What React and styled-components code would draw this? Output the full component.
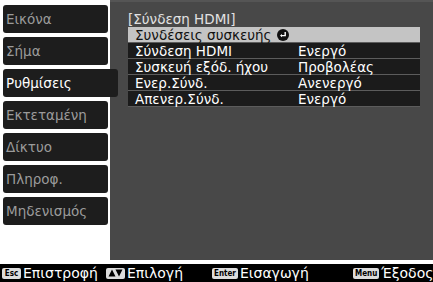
import styled, { createGlobalStyle } from 'styled-components';

const GlobalStyle = createGlobalStyle`
  html, body {
    margin: 0;
    padding: 0;
    background: #ffffff;
  }
  body {
    font-family: 'DejaVu Sans', 'Noto Sans', sans-serif;
  }
`;

const tabs = ['Εικόνα', 'Σήμα', 'Ρυθμίσεις', 'Εκτεταμένη', 'Δίκτυο', 'Πληροφ.', 'Μηδενισμός'];
const activeTab = 'Ρυθμίσεις';

const rows = [
  { label: 'Σύνδεση HDMI', value: 'Ενεργό' },
  { label: 'Συσκευή εξόδ. ήχου', value: 'Προβολέας' },
  { label: 'Ενερ.Σύνδ.', value: 'Ανενεργό' },
  { label: 'Απενερ.Σύνδ.', value: 'Ενεργό' },
];

const hints = [
  { key: 'Esc', label: 'Επιστροφή' },
  { key: 'arrows', label: 'Επιλογή' },
  { key: 'Enter', label: 'Εισαγωγή' },
  { key: 'Menu', label: 'Έξοδος' },
];

function EnterIcon() {
  return (
    <svg width="12" height="12" viewBox="0 0 12 12">
      <circle cx="6" cy="6" r="6" fill="#111" />
      <path d="M8.2 3 V6.6 H4.4" fill="none" stroke="#fff" strokeWidth="1.4" />
      <path d="M3 6.6 L5 5 V8.2 Z" fill="#fff" />
    </svg>
  );
}

function ArrowKeys() {
  return (
    <svg width="15" height="8" viewBox="0 0 15 8">
      <path d="M0.5 7.5 L4 0.5 L7.5 7.5 Z" fill="#000" />
      <path d="M7.5 0.5 L14.5 0.5 L11 7.5 Z" fill="#000" />
    </svg>
  );
}

export default function App() {
  return (
    <>
      <GlobalStyle />
      <Screen>
        <Top>
          <Sidebar>
            {tabs.map((t) => (
              <Tab key={t} $active={t === activeTab}>
                {t}
              </Tab>
            ))}
          </Sidebar>
          <Panel>
            <Title>[Σύνδεση HDMI]</Title>
            <List>
              <HighlightRow>
                Συνδέσεις συσκευής
                <EnterIcon />
              </HighlightRow>
              {rows.map((r) => (
                <Row key={r.label}>
                  <Label>{r.label}</Label>
                  <Value>{r.value}</Value>
                </Row>
              ))}
            </List>
          </Panel>
        </Top>
        <Footer>
          {hints.map((h) => (
            <Hint key={h.key}>
              <Key>{h.key === 'arrows' ? <ArrowKeys /> : h.key}</Key>
              {h.label}
            </Hint>
          ))}
        </Footer>
      </Screen>
    </>
  );
}

const Screen = styled.div`
  width: 433px;
  height: 282px;
  display: flex;
  flex-direction: column;
  overflow: hidden;
`;

const Top = styled.div`
  display: flex;
  height: 260px;
`;

const Sidebar = styled.div`
  width: 107px;
  flex-shrink: 0;
  padding: 5px 0 0 3px;
  display: flex;
  flex-direction: column;
  gap: 4px;
  position: relative;
  z-index: 1;
`;

const Tab = styled.div`
  width: ${({ $active }) => ($active ? '115px' : '105px')};
  height: 28px;
  box-sizing: border-box;
  background: #1d1d1d;
  border-radius: 3px;
  padding-left: 3px;
  display: flex;
  align-items: center;
  font-size: 13.5px;
  color: ${({ $active }) => ($active ? '#ffffff' : '#9b9b9b')};
`;

const Panel = styled.div`
  flex: 1;
  background: #484848;
  padding: 9px 13px 0 18px;
  border-top: 2px solid #555;
  box-sizing: border-box;
`;

const Title = styled.div`
  font-size: 13.5px;
  line-height: 16px;
  color: #e2e2e2;
`;

const List = styled.div`
  display: flex;
  flex-direction: column;
  gap: 1px;
  background: #5c5c5c;
  border-bottom: 1px solid #5c5c5c;
`;

const Row = styled.div`
  display: grid;
  grid-template-columns: 163px 1fr;
  height: 15px;
  align-items: center;
  background: #1b1b1b;
  padding-left: 7px;
  font-size: 13.5px;
  color: #ffffff;
  white-space: nowrap;
`;

const HighlightRow = styled.div`
  display: flex;
  align-items: center;
  gap: 5px;
  height: 15px;
  background: #c4c4c4;
  padding-left: 7px;
  font-size: 13.5px;
  color: #111111;
  white-space: nowrap;
`;

const Label = styled.span``;

const Value = styled.span``;

const Footer = styled.div`
  margin-top: 4px;
  height: 18px;
  background: #000000;
  display: grid;
  grid-template-columns: 104px 106px 141px 1fr;
  padding-left: 2px;
  align-items: center;
`;

const Hint = styled.div`
  display: flex;
  align-items: center;
  gap: 2px;
  font-size: 14px;
  color: #ffffff;
  white-space: nowrap;
`;

const Key = styled.span`
  display: inline-flex;
  align-items: center;
  justify-content: center;
  height: 11px;
  padding: 0 2px;
  min-width: 15px;
  background: #dcdcdc;
  border-radius: 2px;
  color: #000;
  font-family: 'DejaVu Sans Condensed', 'DejaVu Sans', sans-serif;
  font-size: 8px;
  font-weight: bold;
`;
